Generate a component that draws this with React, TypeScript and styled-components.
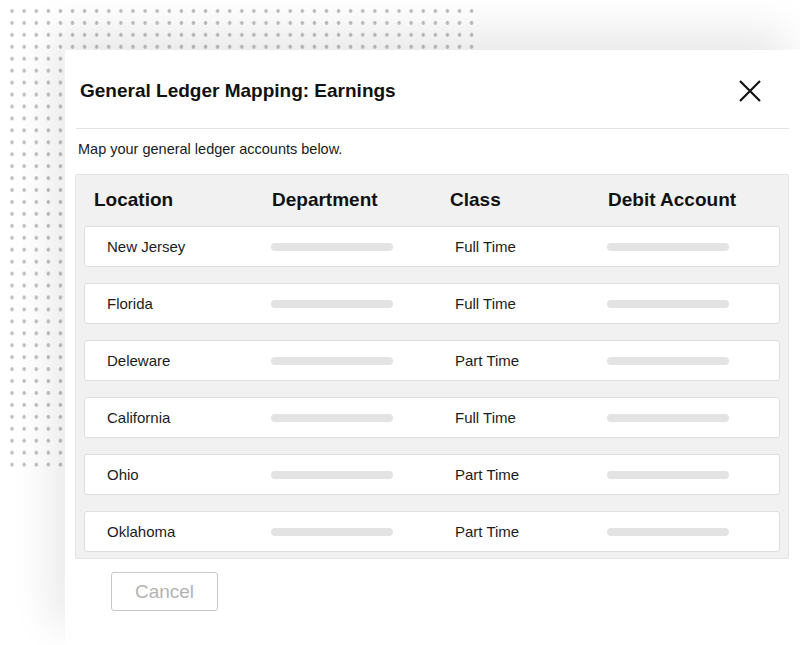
import React from "react";
import styled, { createGlobalStyle } from "styled-components";

const GlobalStyle = createGlobalStyle`
  html, body { margin: 0; padding: 0; background: #ffffff; }
  body { font-family: "Liberation Sans", Arial, sans-serif; }
`;

const Stage = styled.div`
  position: relative;
  width: 800px;
  height: 645px;
  overflow: hidden;
  background: #ffffff;
  padding-top: 50px;
  box-sizing: border-box;
`;

const DotPattern = styled.div`
  position: absolute;
  left: 6px;
  top: 5px;
  width: 473px;
  height: 464px;
  background-image: radial-gradient(circle, #bdbdbd 1.5px, transparent 2.1px);
  background-size: 12.1px 11.95px;
  z-index: 0;
`;

const Dialog = styled.section`
  position: relative;
  z-index: 1;
  margin-left: 65px;
  width: 735px;
  height: 595px;
  box-sizing: border-box;
  background: #ffffff;
  padding: 0 11px 0 10px;
  box-shadow: -14px -20px 40px rgba(0, 0, 0, 0.09);
  display: flex;
  flex-direction: column;
  align-items: flex-start;
`;

const Header = styled.header`
  align-self: stretch;
  height: 79px;
  box-sizing: border-box;
  display: flex;
  align-items: center;
  justify-content: space-between;
  padding: 3px 28px 0 4px;
  border-bottom: 1px solid #e2e2e2;
  margin-left: 1px;
`;

const Title = styled.h1`
  margin: 0;
  font-size: 19px;
  font-weight: 700;
  color: #111111;
  letter-spacing: 0;
`;

const CloseButton = styled.button`
  width: 22px;
  height: 22px;
  padding: 0;
  border: none;
  background: transparent;
  display: flex;
  align-items: center;
  justify-content: center;
  cursor: pointer;
`;

const Subtitle = styled.p`
  margin: 11px 0 0 3px;
  font-size: 14.5px;
  line-height: 18px;
  color: #1a1a1a;
`;

const Panel = styled.div`
  margin-top: 16px;
  align-self: stretch;
  background: #f1f1f1;
  border: 1px solid #e3e3e3;
  border-radius: 2px;
  padding: 0 8px 6px 8px;
  display: flex;
  flex-direction: column;
  gap: 16px;
`;

const HeadRow = styled.div`
  height: 51px;
  box-sizing: border-box;
  padding: 0 0 2px 10px;
  display: grid;
  grid-template-columns: 178px 178px 158px 1fr;
  align-items: center;
  margin-bottom: -16px;
`;

const HeadCell = styled.div`
  font-size: 19px;
  font-weight: 700;
  color: #111111;
`;

const Row = styled.div`
  height: 41px;
  box-sizing: border-box;
  background: #ffffff;
  border: 1px solid #dedede;
  border-radius: 3px;
  padding-left: 22px;
  display: grid;
  grid-template-columns: 164px 184px 152px 1fr;
  align-items: center;
`;

const Cell = styled.div`
  font-size: 15px;
  color: #1c1c1c;
`;

const Bar = styled.div`
  width: 122px;
  height: 8px;
  border-radius: 4px;
  background: #e3e3e3;
`;

const CancelButton = styled.button`
  margin: 13px 0 0 36px;
  width: 107px;
  height: 39px;
  box-sizing: border-box;
  background: #ffffff;
  border: 1px solid #c9c9c9;
  border-radius: 3px;
  font-family: "Liberation Sans", Arial, sans-serif;
  font-size: 19px;
  color: #b3b3b3;
  padding: 0;
`;

const rows = [
  { location: "New Jersey", cls: "Full Time" },
  { location: "Florida", cls: "Full Time" },
  { location: "Deleware", cls: "Part Time" },
  { location: "California", cls: "Full Time" },
  { location: "Ohio", cls: "Part Time" },
  { location: "Oklahoma", cls: "Part Time" },
];

export default function App() {
  return (
    <>
      <GlobalStyle />
      <Stage>
        <DotPattern />
        <Dialog>
          <Header>
            <Title>General Ledger Mapping: Earnings</Title>
            <CloseButton aria-label="Close">
              <svg width="22" height="22" viewBox="0 0 22 22">
                <path d="M1 1 L21 21 M21 1 L1 21" stroke="#111" strokeWidth="2.2" fill="none" />
              </svg>
            </CloseButton>
          </Header>
          <Subtitle>Map your general ledger accounts below.</Subtitle>
          <Panel>
            <HeadRow>
              <HeadCell>Location</HeadCell>
              <HeadCell>Department</HeadCell>
              <HeadCell>Class</HeadCell>
              <HeadCell>Debit Account</HeadCell>
            </HeadRow>
            {rows.map((r) => (
              <Row key={r.location}>
                <Cell>{r.location}</Cell>
                <Bar />
                <Cell>{r.cls}</Cell>
                <Bar />
              </Row>
            ))}
          </Panel>
          <CancelButton>Cancel</CancelButton>
        </Dialog>
      </Stage>
    </>
  );
}
